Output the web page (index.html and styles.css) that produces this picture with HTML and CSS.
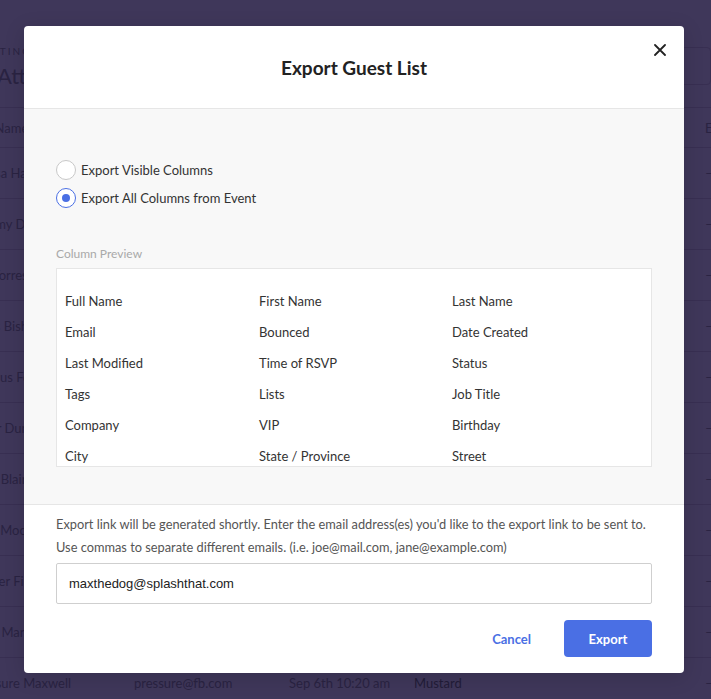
FILE: index.html
```
<!DOCTYPE html>
<html lang="en">
<head>
    <meta charset="UTF-8">
    <meta name="viewport" content="width=device-width, initial-scale=1.0">
    <title>Export Guest List</title>
    <link rel="stylesheet" href="styles.css">
</head>
<body>
    <div class="page">
        <div class="page-header">
            <div class="page-titles">
                <div class="page-kicker">MEETING</div>
                <div class="page-title">Attendees</div>
            </div>
            <div class="page-actions">
                <span class="ghost-btn"></span>
                <span class="ghost-btn"></span>
            </div>
        </div>
        <div class="guest-table">
            <div class="guest-row head">
                <span class="c-name">Full Name</span>
                <span class="c-email">Email</span>
                <span class="c-date">Date Created</span>
                <span class="c-tag">Status</span>
                <span class="c-end">E</span>
            </div>
            <div class="guest-row"><span class="c-name">Alyssa Hart</span><span class="c-email">alyssa@fb.com</span><span class="c-date">Sep 6th 10:20 am</span><span class="c-tag">Mustard</span><span class="c-end">–</span></div>
            <div class="guest-row"><span class="c-name">Tommy Doyle</span><span class="c-email">tommy@fb.com</span><span class="c-date">Sep 6th 10:20 am</span><span class="c-tag">Mustard</span><span class="c-end">–</span></div>
            <div class="guest-row"><span class="c-name">Pat Torres</span><span class="c-email">pat@fb.com</span><span class="c-date">Sep 6th 10:20 am</span><span class="c-tag">Mustard</span><span class="c-end">–</span></div>
            <div class="guest-row"><span class="c-name">Chris Bishop</span><span class="c-email">chris@fb.com</span><span class="c-date">Sep 6th 10:20 am</span><span class="c-tag">Mustard</span><span class="c-end">–</span></div>
            <div class="guest-row"><span class="c-name">Marcus Ford</span><span class="c-email">marcus@fb.com</span><span class="c-date">Sep 6th 10:20 am</span><span class="c-tag">Mustard</span><span class="c-end">–</span></div>
            <div class="guest-row"><span class="c-name">Peter Dunn</span><span class="c-email">peter@fb.com</span><span class="c-date">Sep 6th 10:20 am</span><span class="c-tag">Mustard</span><span class="c-end">–</span></div>
            <div class="guest-row"><span class="c-name">Kate Blair</span><span class="c-email">kate@fb.com</span><span class="c-date">Sep 6th 10:20 am</span><span class="c-tag">Mustard</span><span class="c-end">–</span></div>
            <div class="guest-row"><span class="c-name">Jane Moore</span><span class="c-email">jane@fb.com</span><span class="c-date">Sep 6th 10:20 am</span><span class="c-tag">Mustard</span><span class="c-end">–</span></div>
            <div class="guest-row"><span class="c-name">Becker Finn</span><span class="c-email">becker@fb.com</span><span class="c-date">Sep 6th 10:20 am</span><span class="c-tag">Mustard</span><span class="c-end">–</span></div>
            <div class="guest-row"><span class="c-name">John Marsh</span><span class="c-email">john@fb.com</span><span class="c-date">Sep 6th 10:20 am</span><span class="c-tag">Mustard</span><span class="c-end">–</span></div>
            <div class="guest-row"><span class="c-name">Pressure Maxwell</span><span class="c-email">pressure@fb.com</span><span class="c-date">Sep 6th 10:20 am</span><span class="c-tag">Mustard</span><span class="c-end">–</span></div>
        </div>
    </div>

    <div class="modal">
        <div class="modal-header">
            <h2 class="modal-title">Export Guest List</h2>
            <button class="modal-close" aria-label="Close">
                <svg width="12" height="12" viewBox="0 0 12 12">
                    <path d="M1 1 L11 11 M11 1 L1 11" stroke="#222" stroke-width="1.8" stroke-linecap="round"/>
                </svg>
            </button>
        </div>

        <div class="modal-body">
            <div class="radio-group">
                <label class="radio-row">
                    <span class="radio"></span>
                    Export Visible Columns
                </label>
                <label class="radio-row">
                    <span class="radio checked"></span>
                    Export All Columns from Event
                </label>
            </div>

            <div class="preview-label">Column Preview</div>
            <div class="preview-box">
                <div class="preview-grid">
                    <span>Full Name</span><span>First Name</span><span>Last Name</span>
                    <span>Email</span><span>Bounced</span><span>Date Created</span>
                    <span>Last Modified</span><span>Time of RSVP</span><span>Status</span>
                    <span>Tags</span><span>Lists</span><span>Job Title</span>
                    <span>Company</span><span>VIP</span><span>Birthday</span>
                    <span>City</span><span>State / Province</span><span>Street</span>
                    <span>Zip Code</span><span>Country</span><span>Phone</span>
                </div>
            </div>
        </div>

        <div class="modal-footer">
            <p class="export-note">Export link will be generated shortly. Enter the email address(es) you'd like to the export link to be sent to.<br>Use commas to separate different emails. (i.e. joe@mail.com, jane@example.com)</p>
            <input class="email-input" type="text" value="maxthedog@splashthat.com">
            <div class="modal-actions">
                <button class="btn-link">Cancel</button>
                <button class="btn-primary">Export</button>
            </div>
        </div>
    </div>
</body>
</html>
```

FILE: styles.css
```
:root {
    --overlay-bg: #3f375a;
    --overlay-line: #382f52;
    --overlay-text: #2a2342;
    --modal-gray: #f8f8f8;
    --border: #e6e6e6;
    --text: #333333;
    --muted: #a9a9a9;
    --blue: #4a6fe4;
}

html, body {
    margin: 0;
    height: 100%;
    overflow: hidden;
}

body {
    background-color: var(--overlay-bg);
    font-family: Lato, "Open Sans", sans-serif;
    color: var(--text);
}

/* background page, dimmed under the modal */
.page {
    color: var(--overlay-text);
    font-size: 13px;
}

.page-header {
    height: 108px;
    display: flex;
    justify-content: space-between;
    border-bottom: 1px solid var(--overlay-line);
    box-sizing: border-box;
}

.page-titles {
    padding-top: 45px;
    margin-left: -3px;
}

.page-kicker {
    font-size: 10px;
    letter-spacing: 2px;
    margin-left: -24px;
    line-height: 12px;
}

.page-title {
    font-size: 22px;
    line-height: 26px;
    margin-top: 6px;
}

.page-actions {
    display: flex;
    gap: 6px;
    padding-top: 47px;
    margin-right: -40px;
}

.ghost-btn {
    width: 32px;
    height: 36px;
    border: 1px solid var(--overlay-line);
    border-radius: 4px;
}

.guest-row {
    display: flex;
    align-items: center;
    height: 51px;
    border-bottom: 1px solid var(--overlay-line);
    box-sizing: border-box;
    white-space: nowrap;
}

.guest-row.head {
    height: 40px;
}

.c-name {
    width: 163px;
    flex-shrink: 0;
    margin-left: -29px;
}

.c-email {
    width: 155px;
    flex-shrink: 0;
}

.c-date {
    width: 125px;
    flex-shrink: 0;
}

.c-tag {
    width: 291px;
    flex-shrink: 0;
    color: #221c38;
}

.c-end {
    width: 20px;
    flex-shrink: 0;
}

/* modal */
.modal {
    position: absolute;
    top: 26px;
    left: 24px;
    width: 660px;
    height: 647px;
    background: #fff;
    border-radius: 4px;
    box-shadow: 0 4px 20px rgba(0, 0, 0, 0.15);
    display: flex;
    flex-direction: column;
    overflow: hidden;
}

.modal-header {
    height: 83px;
    flex-shrink: 0;
    display: flex;
    align-items: center;
    justify-content: center;
    border-bottom: 1px solid var(--border);
    box-sizing: border-box;
    position: relative;
}

.modal-title {
    margin: 0;
    font-size: 19px;
    font-weight: 700;
    color: #222;
}

.modal-close {
    position: absolute;
    top: 18px;
    right: 18px;
    width: 12px;
    height: 12px;
    padding: 0;
    border: none;
    background: none;
    display: flex;
    cursor: pointer;
}

.modal-body {
    background-color: var(--modal-gray);
    padding: 51px 32px 37px;
    border-bottom: 1px solid var(--border);
}

.radio-group {
    display: flex;
    flex-direction: column;
    gap: 8px;
    margin-bottom: 39px;
}

.radio-row {
    display: flex;
    align-items: center;
    gap: 5px;
    font-size: 13px;
    line-height: 20px;
    color: var(--text);
}

.radio {
    width: 18px;
    height: 18px;
    border: 1px solid #c8c8c8;
    border-radius: 50%;
    background: #fff;
    display: flex;
    align-items: center;
    justify-content: center;
}

.radio.checked {
    border-color: var(--blue);
}

.radio.checked::after {
    content: "";
    width: 8px;
    height: 8px;
    border-radius: 50%;
    background: var(--blue);
}

.preview-label {
    font-size: 12px;
    color: var(--muted);
    line-height: 14px;
    margin-bottom: 7px;
}

.preview-box {
    height: 199px;
    box-sizing: border-box;
    background: #fff;
    border: 1px solid var(--border);
    overflow: hidden;
}

.preview-grid {
    display: grid;
    grid-template-columns: 194px 193px 1fr;
    grid-auto-rows: 31px;
    align-items: center;
    padding: 16px 8px;
    font-size: 13px;
    color: var(--text);
}

.modal-footer {
    padding: 8px 32px 16px;
}

.export-note {
    margin: 0 0 4px;
    font-size: 12.8px;
    line-height: 23px;
    color: #555;
    white-space: nowrap;
}

.email-input {
    display: block;
    width: 100%;
    height: 41px;
    box-sizing: border-box;
    border: 1px solid #cfcfcf;
    border-radius: 2px;
    padding: 0 12px;
    font-family: "Liberation Sans", Arial, sans-serif;
    font-size: 13px;
    color: #222;
    outline: none;
}

.modal-actions {
    display: flex;
    justify-content: flex-end;
    align-items: center;
    gap: 15px;
    margin-top: 16px;
}

.btn-link {
    border: none;
    background: none;
    color: var(--blue);
    font-family: Lato, sans-serif;
    font-size: 13px;
    font-weight: 700;
    padding: 0 18px;
    cursor: pointer;
}

.btn-primary {
    width: 88px;
    height: 37px;
    border: none;
    border-radius: 4px;
    background: var(--blue);
    color: #fff;
    font-family: Lato, sans-serif;
    font-size: 13px;
    font-weight: 700;
    cursor: pointer;
}
```
